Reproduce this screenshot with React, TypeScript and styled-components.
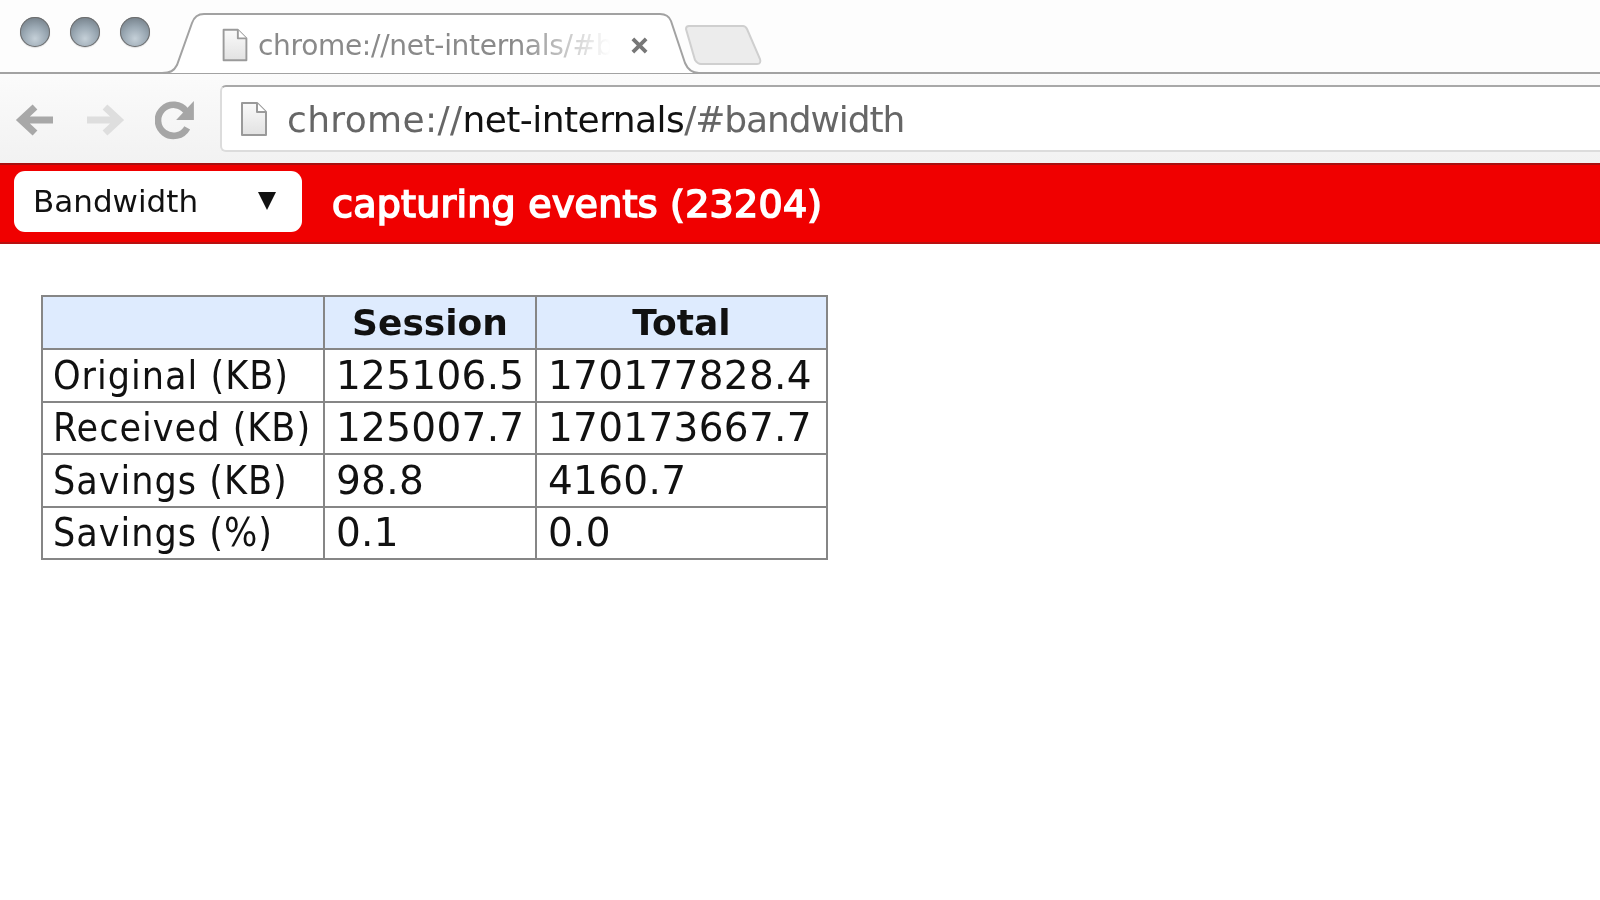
import React from "react";
import styled, { createGlobalStyle } from "styled-components";

const GlobalStyle = createGlobalStyle`
  html, body {
    margin: 0;
    padding: 0;
    background: #fff;
  }
  body {
    font-family: "DejaVu Sans", "Liberation Sans", sans-serif;
    overflow: hidden;
  }
`;

const rows = [
  ["Original (KB)", "125106.5", "170177828.4"],
  ["Received (KB)", "125007.7", "170173667.7"],
  ["Savings (KB)", "98.8", "4160.7"],
  ["Savings (%)", "0.1", "0.0"],
];

const PageIcon: React.FC<{ width: number; height: number }> = ({ width, height }) => (
  <svg width={width} height={height} viewBox="0 0 28 36" fill="none">
    <path
      d="M2 2h15l9 9v23H2z"
      fill="url(#pageFill)"
      stroke="#9a9a9a"
      strokeWidth="2"
      strokeLinejoin="round"
    />
    <path d="M17 2v9h9" fill="#fff" stroke="#9a9a9a" strokeWidth="2" strokeLinejoin="round" />
    <defs>
      <linearGradient id="pageFill" x1="0" y1="0" x2="0" y2="1">
        <stop offset="0" stopColor="#fafafa" />
        <stop offset="1" stopColor="#e2e2e2" />
      </linearGradient>
    </defs>
  </svg>
);

const App: React.FC = () => (
  <Page>
    <GlobalStyle />
    <TabStrip>
      <WindowButtons>
        <WindowButton />
        <WindowButton />
        <WindowButton />
      </WindowButtons>
      <Tab>
        <TabShape viewBox="0 0 537 61">
          <path
            d="M0 60c8 0 12-2 15-8L30 10C32 4 36 1 42 1h456c6 0 9 2 11 7l14 42c3 7 7 10 14 10"
            fill="#fff"
            stroke="#a2a2a2"
            strokeWidth="2"
          />
        </TabShape>
        <TabIconSlot>
          <PageIcon width={28} height={36} />
        </TabIconSlot>
        <TabTitle>chrome://net-internals/#bandwidth</TabTitle>
        <TabClose viewBox="0 0 20 20">
          <path d="M3 3l14 14M17 3L3 17" stroke="#777" strokeWidth="4" />
        </TabClose>
      </Tab>
      <NewTab viewBox="0 0 80 40">
        <path
          d="M3 4c0-2 1-3 3-3h54c2 0 3 1 4 3l13 30c1 3 0 5-3 5H18c-3 0-4-1-6-4z"
          fill="#ececec"
          stroke="#cfcfcf"
          strokeWidth="2"
        />
      </NewTab>
    </TabStrip>
    <Toolbar>
      <NavIcon viewBox="0 0 40 36">
        <path d="M38 18H10M20 5L6 18l14 13" fill="none" stroke="#a8a8a8" strokeWidth="7" />
      </NavIcon>
      <NavIcon viewBox="0 0 40 36">
        <path d="M2 18h28M20 5l14 13-14 13" fill="none" stroke="#dedede" strokeWidth="7" />
      </NavIcon>
      <NavIcon viewBox="2 2 36 36">
        <path d="M31 27a14 14 0 1 1-1-15" fill="none" stroke="#a6a6a6" strokeWidth="6" />
        <path d="M37 3v17H21z" fill="#a6a6a6" />
      </NavIcon>
      <AddressBar>
        <AddressIcon>
          <PageIcon width={28} height={36} />
        </AddressIcon>
        <Url>
          <UrlScheme>chrome://</UrlScheme>
          <UrlHost>net-internals</UrlHost>
          <UrlPath>/#bandwidth</UrlPath>
        </Url>
      </AddressBar>
    </Toolbar>
    <StatusBar>
      <ViewSelect>
        <span>Bandwidth</span>
        <SelectArrow />
      </ViewSelect>
      <StatusText>capturing events (23204)</StatusText>
    </StatusBar>
    <Content>
      <StatsTable>
        <colgroup>
          <col width={282} />
          <col width={212} />
          <col width={291} />
        </colgroup>
        <thead>
          <tr>
            <HeadCell />
            <HeadCell>Session</HeadCell>
            <HeadCell>Total</HeadCell>
          </tr>
        </thead>
        <tbody>
          {rows.map(([label, session, total]) => (
            <tr key={label}>
              <LabelCell>{label}</LabelCell>
              <Cell>{session}</Cell>
              <Cell>{total}</Cell>
            </tr>
          ))}
        </tbody>
      </StatsTable>
    </Content>
  </Page>
);

const Page = styled.div`
  width: 1600px;
  height: 900px;
  overflow: hidden;
  background: #fff;
  filter: blur(0.6px);
`;

const TabStrip = styled.div`
  display: flex;
  align-items: flex-end;
  box-sizing: border-box;
  height: 74px;
  background: #fdfdfd;
  border-bottom: 2px solid #a2a2a2;
`;

const WindowButtons = styled.div`
  display: flex;
  gap: 20px;
  align-self: flex-start;
  width: 162px;
  padding: 17px 0 0 20px;
  box-sizing: border-box;
`;

const WindowButton = styled.div`
  flex: none;
  width: 30px;
  height: 30px;
  border-radius: 50%;
  background: radial-gradient(circle at 50% 72%, #c5d0d8 0%, #9aa8b3 45%, #6f7a83 90%);
  box-shadow: inset 0 0 0 1px #6d6d6d, 0 1px 1px #ddd;
`;

const Tab = styled.div`
  position: relative;
  flex: none;
  display: flex;
  align-items: center;
  box-sizing: border-box;
  width: 537px;
  height: 61px;
  margin-bottom: -2px;
  padding: 3px 0 0 59px;
`;

const TabShape = styled.svg`
  position: absolute;
  inset: 0;
  width: 100%;
  height: 100%;
`;

const TabIconSlot = styled.div`
  position: relative;
  display: flex;
  flex: none;
  transform: scale(0.95);
`;

const TabTitle = styled.div`
  position: relative;
  width: 360px;
  margin-left: 9px;
  overflow: hidden;
  white-space: nowrap;
  font-size: 28px;
  letter-spacing: -0.3px;
  color: #8a8a8a;
  -webkit-mask-image: linear-gradient(to right, #000 72%, transparent 98%);
  mask-image: linear-gradient(to right, #000 72%, transparent 98%);
`;

const TabClose = styled.svg`
  position: relative;
  flex: none;
  width: 19px;
  height: 19px;
  margin-left: 12px;
`;

const NewTab = styled.svg`
  flex: none;
  width: 80px;
  height: 40px;
  margin: 0 0 7px -16px;
`;

const Toolbar = styled.div`
  display: flex;
  align-items: center;
  gap: 30px;
  box-sizing: border-box;
  height: 89px;
  padding: 2px 0 0 15px;
  background: linear-gradient(#fbfbfb, #f2f2f2);
`;

const NavIcon = styled.svg`
  flex: none;
  width: 40px;
  height: 40px;
`;

const AddressBar = styled.div`
  flex: 1;
  display: flex;
  align-items: center;
  box-sizing: border-box;
  height: 67px;
  margin-left: -5px;
  margin-top: -2px;
  padding-left: 18px;
  background: #fff;
  border: 2px solid #dcdcdc;
  border-top-color: #a8a8a8;
  border-right: none;
  border-radius: 6px 0 0 6px;
`;

const AddressIcon = styled.div`
  display: flex;
  flex: none;
`;

const Url = styled.div`
  margin: 2px 0 0 19px;
  font-size: 36px;
  white-space: nowrap;
  color: #666;
`;

const UrlScheme = styled.span`
  letter-spacing: 0.35px;
`;

const UrlHost = styled.span`
  letter-spacing: -0.55px;
  color: #111;
`;

const UrlPath = styled.span`
  letter-spacing: -1.1px;
`;

const StatusBar = styled.div`
  display: flex;
  align-items: center;
  box-sizing: border-box;
  height: 81px;
  padding-left: 14px;
  background: #f00000;
  border-top: 2px solid #a81010;
  border-bottom: 2px solid #b81010;
`;

const ViewSelect = styled.div`
  display: flex;
  align-items: center;
  justify-content: space-between;
  box-sizing: border-box;
  width: 288px;
  height: 61px;
  margin-bottom: 4px;
  padding: 0 26px 2px 19px;
  background: #fff;
  border-radius: 11px;
  font-size: 31px;
  color: #111;
`;

const SelectArrow = styled.div`
  width: 0;
  height: 0;
  border-left: 9px solid transparent;
  border-right: 9px solid transparent;
  border-top: 18px solid #111;
`;

const StatusText = styled.div`
  margin-left: 30px;
  font-size: 38px;
  -webkit-text-stroke: 1.7px #fff;
  letter-spacing: 0.25px;
  white-space: nowrap;
  color: #fff;
`;

const Content = styled.div`
  padding: 51px 0 0 41px;
`;

const StatsTable = styled.table`
  border-collapse: collapse;
  table-layout: fixed;
  width: 785px;
`;

const HeadCell = styled.th`
  box-sizing: border-box;
  height: 53px;
  padding: 0;
  border: 2px solid #868686;
  background: #deebfe;
  font-size: 36px;
  font-weight: bold;
  text-align: center;
  color: #111;
`;

const Cell = styled.td`
  box-sizing: border-box;
  height: 52.5px;
  padding: 0 0 0 11px;
  border: 2px solid #868686;
  font-size: 39px;
  letter-spacing: 0.3px;
  white-space: nowrap;
  color: #111;
`;

const LabelCell = styled(Cell)`
  padding-left: 10px;
  font-stretch: condensed;
  letter-spacing: 1px;
`;

export default App;
